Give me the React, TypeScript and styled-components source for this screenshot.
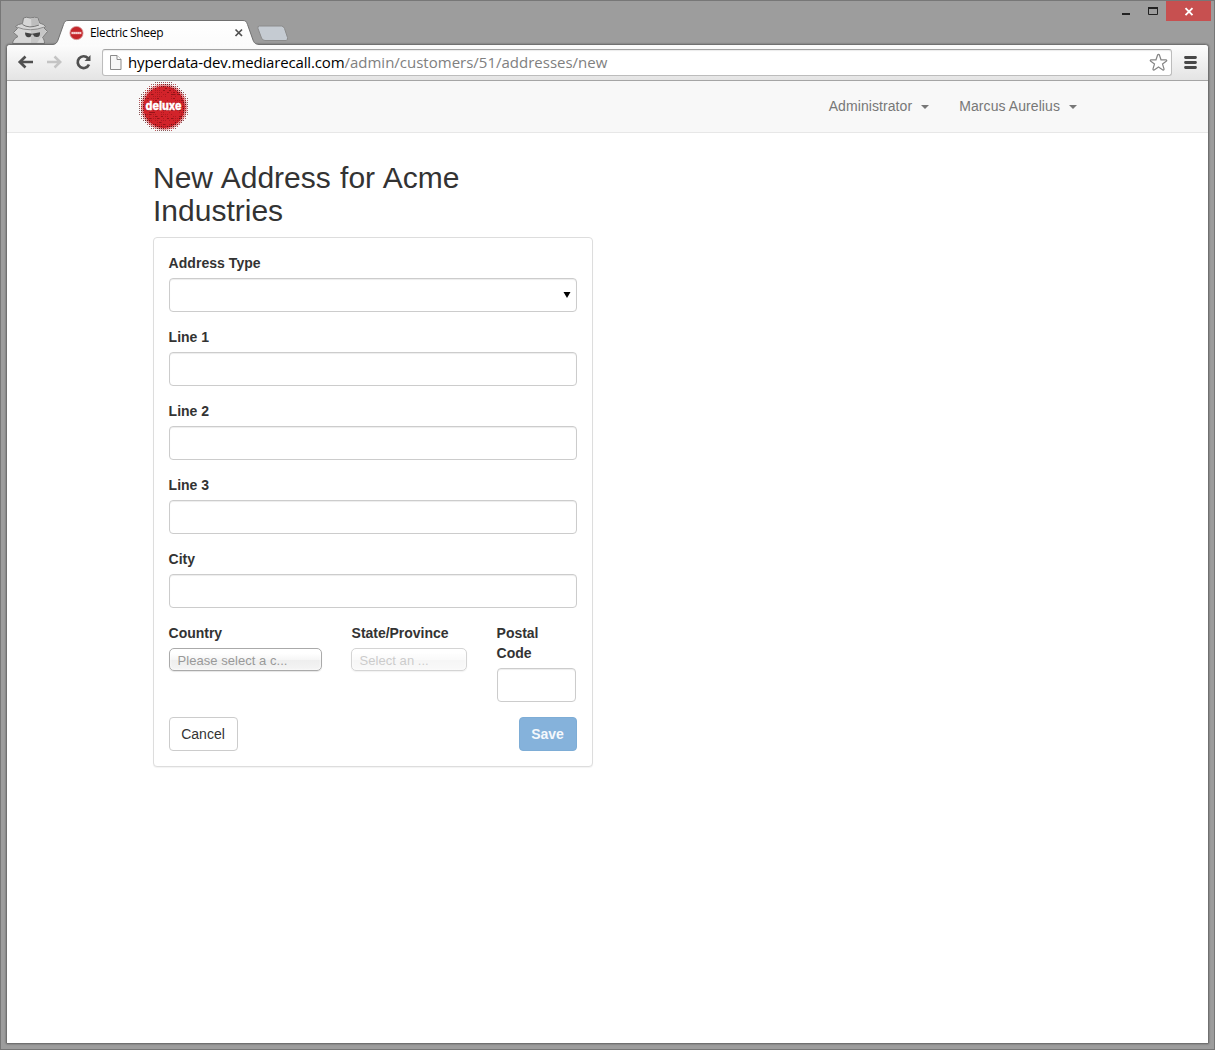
import React from "react";
import styled, { createGlobalStyle } from "styled-components";

const GlobalStyle = createGlobalStyle`
  * { box-sizing: border-box; }
  html, body { margin: 0; padding: 0; }
  body { font-family: "Liberation Sans", Arial, sans-serif; font-size: 14px; line-height: 20px; color: #333; overflow: hidden; }
`;

const Desktop = styled.div`
  display: flex;
  flex-direction: column;
  width: 1215px;
  height: 1050px;
  padding: 0 5px 5px 5px;
  background: #9d9d9d;
  border: 1px solid #777;
`;

const TitleBar = styled.header`
  display: flex;
  align-items: flex-end;
  height: 43px;
  flex: none;
`;

const Incognito = styled.svg`
  display: block;
  width: 38px;
  height: 29px;
  margin-left: 5px;
`;

const Tab = styled.div`
  position: relative;
  display: flex;
  align-items: center;
  width: 208px;
  height: 25px;
  margin: 0 0 -1px 4px;
  padding: 0 17px 0 17px;
  z-index: 2;
`;

const TabShape = styled.svg`
  position: absolute;
  left: 0;
  top: 0;
`;

const TabTitle = styled.span`
  position: relative;
  flex: 1;
  margin-left: 5px;
  font: 12px/16px "Open Sans", sans-serif;
  letter-spacing: -0.35px;
  color: #000;
  white-space: nowrap;
`;

const Favicon = styled.svg`
  position: relative;
  display: block;
  margin-left: -1px;
`;

const CloseTab = styled.svg`
  position: relative;
  display: block;
`;

const NewTab = styled.svg`
  display: block;
  margin: 0 0 2px -5px;
`;

const WindowButtons = styled.div`
  display: flex;
  align-self: flex-start;
  margin-left: auto;
  margin-right: -2px;
`;

const WindowButton = styled.div<{ $w: number; $close?: boolean }>`
  width: ${(p) => p.$w}px;
  height: 20px;
  background: ${(p) => (p.$close ? "#c75050" : "transparent")};
  svg { display: block; }
`;

const Frame = styled.div`
  display: flex;
  flex-direction: column;
  flex: 1;
  border: 1px solid #707070;
  border-radius: 4px 4px 1px 1px;
  background: #fff;
  box-shadow: 0 0 2px rgba(0, 0, 0, 0.45);
  overflow: hidden;
`;

const Toolbar = styled.div`
  display: flex;
  align-items: flex-start;
  height: 36px;
  flex: none;
  padding: 4px 11px 0 10px;
  background: linear-gradient(#fcfcfc, #e4e4e4);
  border-bottom: 1px solid #a5a5a5;
`;

const ToolIcon = styled.svg<{ $gap: number }>`
  display: block;
  flex: none;
  margin-right: ${(p) => p.$gap}px;
`;

const AddressBar = styled.div`
  display: flex;
  align-items: center;
  flex: 1;
  height: 27px;
  padding: 0 3px 0 6px;
  background: #fff;
  border: 1px solid #bcbcbc;
  border-top-color: #a2a2a2;
  border-radius: 3px;
  box-shadow: inset 0 1px 1px rgba(0, 0, 0, 0.08);
`;

const Url = styled.span`
  flex: 1;
  margin: 0 0 2px 6px;
  font: 15px/22px "Open Sans", sans-serif;
  color: #808080;
  white-space: nowrap;
  b { font-weight: 400; color: #000; letter-spacing: -0.15px; }
`;

const Navbar = styled.nav`
  display: flex;
  justify-content: space-between;
  height: 52px;
  flex: none;
  padding: 0 116px 0 131px;
  background: #f8f8f8;
  border-bottom: 1px solid #e7e7e7;
`;

const Brand = styled.svg`
  display: block;
`;

const NavLinks = styled.div`
  display: flex;
`;

const NavLink = styled.a`
  display: flex;
  align-items: center;
  padding: 0 15px;
  height: 50px;
  color: #777;
  letter-spacing: 0.08px;
  white-space: nowrap;
`;

const Caret = styled.span`
  width: 8px;
  height: 4px;
  margin: 2px 0 0 9px;
  border-top: 4px solid #777;
  border-left: 4px solid transparent;
  border-right: 4px solid transparent;
`;

const Content = styled.main`
  width: 440px;
  margin: 28px 0 0 146px;
`;

const Heading = styled.h2`
  margin: 0 0 10px;
  width: 380px;
  font-size: 30px;
  line-height: 33px;
  font-weight: 400;
  word-spacing: 1px;
  color: #333;
`;

const Panel = styled.div`
  height: 530px;
  padding: 15px;
  background: #fff;
  border: 1px solid #ddd;
  border-radius: 4px;
  box-shadow: 0 1px 1px rgba(0, 0, 0, 0.05);
`;

const Group = styled.div<{ $w?: number }>`
  width: ${(p) => (p.$w ? p.$w + "px" : "auto")};
  margin-bottom: 15px;
`;

const Label = styled.label<{ $ls?: number }>`
  display: block;
  margin: 0 0 5px -0.4px;
  font-weight: 700;
  letter-spacing: ${(p) => p.$ls ?? -0.03}px;
`;

const Field = styled.div`
  display: flex;
  align-items: center;
  justify-content: flex-end;
  height: 34px;
  padding-right: 5px;
  background: #fff;
  border: 1px solid #ccc;
  border-radius: 4px;
  box-shadow: inset 0 1px 1px rgba(0, 0, 0, 0.075);
`;

const Row = styled.div<{ $gap?: number; $between?: boolean }>`
  display: flex;
  align-items: flex-start;
  gap: ${(p) => p.$gap ?? 0}px;
  justify-content: ${(p) => (p.$between ? "space-between" : "flex-start")};
`;

const Chosen = styled.div<{ $disabled?: boolean }>`
  height: 23px;
  margin-left: ${(p) => (p.$disabled ? "-1px" : "0")};
  padding: 0 0 0 7.6px;
  border: 1px solid #aaa;
  border-radius: 5px;
  background: linear-gradient(#fff 20%, #f6f6f6 50%, #eee 52%, #f4f4f4 100%);
  box-shadow: 0 0 3px #fff inset, 0 1px 1px rgba(0, 0, 0, 0.1);
  color: #999;
  font-size: 13px;
  line-height: 23px;
  letter-spacing: 0.04px;
  opacity: ${(p) => (p.$disabled ? 0.5 : 1)};
  white-space: nowrap;
`;

const Button = styled.button<{ $primary?: boolean }>`
  height: 34px;
  width: ${(p) => (p.$primary ? 58 : 69)}px;
  padding: 0 1px 0 0;
  border: 1px solid ${(p) => (p.$primary ? "#7eadd6" : "#ccc")};
  border-radius: 4px;
  background: ${(p) => (p.$primary ? "#85b2db" : "#fff")};
  color: ${(p) => (p.$primary ? "#f4f8fc" : "#333")};
  font: ${(p) => (p.$primary ? 700 : 400)} 14px/20px "Liberation Sans", Arial, sans-serif;
`;

// Halftone disc: a mottled red centre that breaks up into shrinking dots at the rim.
function halftone() {
  const dots: React.ReactNode[] = [];
  let seed = 7;
  const rand = () => {
    seed = (seed * 16807) % 2147483647;
    return seed / 2147483647;
  };
  for (let y = 0; y < 25; y++) {
    for (let x = 0; x < 25; x++) {
      const cx = x * 2 + 1;
      const cy = y * 2 + 1;
      const d = Math.hypot(cx - 25, cy - 25);
      const r = rand();
      if (d > 25.3) continue;
      if (d > 19.5) {
        const outer = d > 23;
        dots.push(
          <rect key={`${x}-${y}`} x={cx - 1} y={cy - 1} width={1} height={1}
            fill={r > 0.45 ? "#5f1216" : "#a3161b"} opacity={outer ? 0.7 : 0.95} />
        );
      } else if (r > 0.4) {
        dots.push(
          <rect key={`${x}-${y}`} x={cx - 1} y={cy - 1} width={r > 0.82 ? 2 : 1} height={1}
            fill="#6d0a0e" opacity={r > 0.82 ? 0.6 : 0.35} />
        );
      }
    }
  }
  return dots;
}

const lines = ["Line 1", "Line 2", "Line 3", "City"];

export default function App() {
  return (
    <>
      <GlobalStyle />
      <Desktop>
        <TitleBar>
          <Incognito viewBox="0 0 38 29">
            <path d="M1.500 28.500C2 25 4 23 7 21.500L2.500 17.500 6.500 13.500 4.500 11.500Q7 9 11.500 8.500L12.500 3Q15 1.500 19.500 3Q24 1.500 27 3L28.500 8Q33 9 34.500 11.500L33 13 36.500 16.500 31.500 22.500C33 24 33.500 26 33.500 28.500Z" fill="#d6d6d6" stroke="#7b7b7b" />
            <path d="M20 3.500Q24 2 26.500 3.300L28 8.500Q27 11 20.500 11.500Z" fill="#bdbdbd" />
            <path d="M20 14L32.500 13 35.500 16.500 30 22 26 28H20Z" fill="#c6c6c6" />
            <path d="M11.500 9.500Q18 14 28 10" fill="none" stroke="#777" />
            <path d="M5.500 12Q19 17.500 33.500 12" fill="none" stroke="#8d8d8d" />
            <path d="M14 17.500L21 18.800L29 17.200Q29.500 22 26 22Q23 22.300 22 19.500H20.500Q20 22.500 17.500 22.300Q14 22 14 17.500Z" fill="#444" />
          </Incognito>
          <Tab>
            <TabShape width="208" height="25" viewBox="0 0 208 25">
              <defs>
                <linearGradient id="tab" x1="0" y1="0" x2="0" y2="1">
                  <stop offset="0" stopColor="#fff" />
                  <stop offset="1" stopColor="#fbfbfb" />
                </linearGradient>
              </defs>
              <path d="M0 24.500C3 24.200 4 22.500 5 20L10.500 4.500C11.600 1.500 12.500 .5 15 .5H190C192.500 .5 193.500 1.500 194.500 4.500L200 20C201 22.500 202 24.200 206 24.500V25H0Z" fill="url(#tab)" />
              <path d="M0 24.500C3 24.200 4 22.500 5 20L10.500 4.500C11.600 1.500 12.500 .5 15 .5H190C192.500 .5 193.500 1.500 194.500 4.500L200 20C201 22.500 202 24.200 206 24.500" fill="none" stroke="#707070" />
            </TabShape>
            <Favicon width="16" height="16" viewBox="0 0 16 16">
              <circle cx="7.500" cy="8" r="6.600" fill="#c4262b" stroke="#d59a9a" strokeWidth=".8" />
              <rect x="2.500" y="6.800" width="10" height="2.400" fill="#ea9c9e" />
              <path d="M2.500 8H12.500" stroke="#fff" strokeWidth="1" strokeDasharray="1.500 .5" />
            </Favicon>
            <TabTitle>Electric Sheep</TabTitle>
            <CloseTab width="10" height="10" viewBox="0 0 10 10">
              <path d="M1.500 1.500L8 8M8 1.500L1.500 8" stroke="#505050" strokeWidth="1.700" />
            </CloseTab>
          </Tab>
          <NewTab width="33" height="17" viewBox="0 0 33 17">
            <path d="M3.500 1H25.500Q27.500 1 28.500 3.500L31.500 12.500Q32 15.500 30 15.500H9Q6.500 15.500 5.500 13L2 3.500Q1.200 1 3.500 1Z" fill="#c5cbd2" stroke="#8b8b8b" />
          </NewTab>
          <WindowButtons>
            <WindowButton $w={27}>
              <svg width="27" height="20"><path d="M10 13H18" stroke="#222" strokeWidth="2" /></svg>
            </WindowButton>
            <WindowButton $w={27}>
              <svg width="27" height="20"><path d="M9.500 6.500H18.500V13.500H9.500Z" fill="none" stroke="#222" /><path d="M9 7H19" stroke="#222" strokeWidth="2" /></svg>
            </WindowButton>
            <WindowButton $w={45} $close>
              <svg width="45" height="20"><path d="M19.500 7.200L26.500 14.200M26.500 7.200L19.500 14.200" stroke="#fff" strokeWidth="1.900" /></svg>
            </WindowButton>
          </WindowButtons>
        </TitleBar>
        <Frame>
          <Toolbar>
            <ToolIcon width="18" height="26" $gap={11}>
              <path d="M8.500 7.500L2.800 13L8.500 18.500M3 13H16" fill="none" stroke="#505050" strokeWidth="2.700" />
            </ToolIcon>
            <ToolIcon width="18" height="26" $gap={11}>
              <path d="M8.500 7.500L14.200 13L8.500 18.500M14 13H1" fill="none" stroke="#c4c4c4" strokeWidth="2.500" />
            </ToolIcon>
            <ToolIcon width="18" height="26" $gap={9}>
              <path d="M13 9.200A5.900 5.900 0 1 0 14 15.500" fill="none" stroke="#505050" strokeWidth="2.700" />
              <path d="M15.500 6V12H9.500Z" fill="#505050" />
            </ToolIcon>
            <AddressBar>
              <svg width="13" height="17" viewBox="0 0 13 17">
                <path d="M1.500 1.500H8L12 5.500V15.500H1.500Z" fill="#f7f7f7" stroke="#8b8b8b" />
                <path d="M8 1.500V5.500H12" fill="#fff" stroke="#8b8b8b" />
              </svg>
              <Url><b>hyperdata-dev.mediarecall.com</b>/admin/customers/51/addresses/new</Url>
              <svg width="19" height="19" viewBox="0 0 19 19">
                <path d="M9.500 1.300Q10.200 1.300 10.500 2.200L12 6.800H16.800Q18.500 7.100 17.200 8.300L13.500 11L15 15.800Q15.200 17.500 13.800 16.900L9.500 14L5.200 16.900Q3.800 17.500 4 15.800L5.500 11L1.800 8.300Q.5 7.100 2.200 6.800H7L8.500 2.200Q8.800 1.300 9.500 1.300Z" fill="#fff" stroke="#858585" strokeWidth="1.200" />
              </svg>
            </AddressBar>
            <svg width="25" height="26">
              <path d="M13.500 8.500H23.500M13.500 13.500H23.500M13.500 18.500H23.500" stroke="#484848" strokeWidth="2.800" strokeLinecap="round" />
            </svg>
          </Toolbar>
          <Navbar>
            <Brand width="52" height="51" viewBox="0 0 52 51">
              <g transform="translate(1 1)">
                <circle cx="25" cy="25" r="21" fill="#d2232a" />
                <circle cx="25" cy="25" r="22" fill="none" stroke="#ce1c23" strokeOpacity=".45" strokeWidth="2" />
                {halftone()}
                <text x="6.500" y="27.800" textLength="36" lengthAdjust="spacingAndGlyphs" fill="#fff" stroke="#fff" strokeWidth=".3" fontFamily="Inter, sans-serif" fontWeight="800" fontSize="11.500">deluxe</text>
              </g>
            </Brand>
            <NavLinks>
              <NavLink>Administrator<Caret /></NavLink>
              <NavLink>Marcus Aurelius<Caret /></NavLink>
            </NavLinks>
          </Navbar>
          <Content>
            <Heading>New Address for Acme Industries</Heading>
            <Panel>
              <Group>
                <Label $ls={0.04}>Address Type</Label>
                <Field>
                  <svg width="8" height="6"><path d="M.5 0H7.500L4 6Z" fill="#000" /></svg>
                </Field>
              </Group>
              {lines.map((name) => (
                <Group key={name}>
                  <Label>{name}</Label>
                  <Field />
                </Group>
              ))}
              <Row $gap={30}>
                <Group $w={153}>
                  <Label>Country</Label>
                  <Chosen>Please select a c...</Chosen>
                </Group>
                <Group $w={115}>
                  <Label>State/Province</Label>
                  <Chosen $disabled>Select an ...</Chosen>
                </Group>
                <Group $w={79}>
                  <Label>Postal Code</Label>
                  <Field />
                </Group>
              </Row>
              <Row $between>
                <Button>Cancel</Button>
                <Button $primary>Save</Button>
              </Row>
            </Panel>
          </Content>
        </Frame>
      </Desktop>
    </>
  );
}
